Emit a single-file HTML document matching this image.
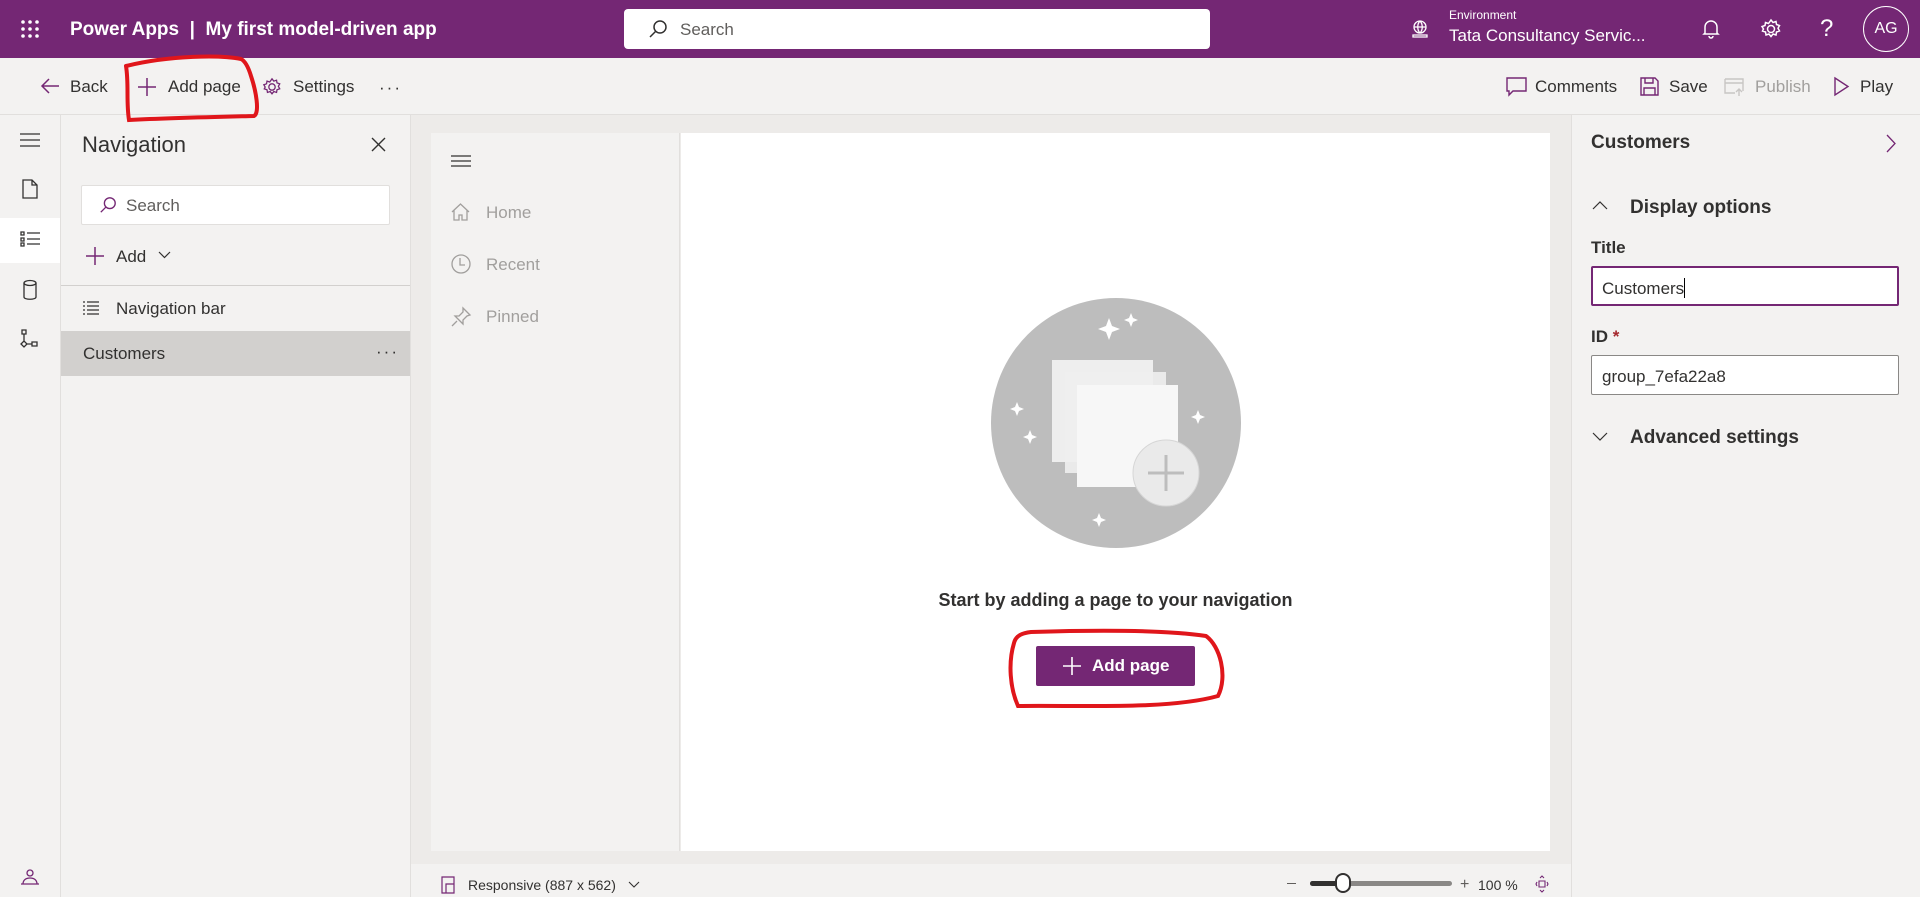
<!DOCTYPE html>
<html><head><meta charset="utf-8"><style>
*{box-sizing:border-box;margin:0;padding:0}
body{width:1920px;height:897px;overflow:hidden;font-family:"Liberation Sans",sans-serif;background:#f3f2f1;position:relative;color:#323130}
.a{position:absolute}
.top{left:0;top:0;width:1920px;height:58px;background:#742774;color:#fff}
.tb{left:0;top:58px;width:1920px;height:57px;background:#f3f2f1;border-bottom:1px solid #e1dfdd}
.t17{font-size:17px;line-height:20px}
svg{position:absolute;overflow:visible}
</style></head><body>
<div class="a top">
 <svg style="left:20px;top:19px" width="20" height="20" viewBox="0 0 20 20" fill="#fff"><circle cx="3" cy="3" r="1.8"/><circle cx="10" cy="3" r="1.8"/><circle cx="17" cy="3" r="1.8"/><circle cx="3" cy="10" r="1.8"/><circle cx="10" cy="10" r="1.8"/><circle cx="17" cy="10" r="1.8"/><circle cx="3" cy="17" r="1.8"/><circle cx="10" cy="17" r="1.8"/><circle cx="17" cy="17" r="1.8"/></svg>
 <div class="a" style="left:70px;top:19px;font-size:19px;font-weight:bold;white-space:nowrap">Power Apps &nbsp;|&nbsp; My first model-driven app</div>
 <div class="a" style="left:624px;top:9px;width:586px;height:40px;background:#fff;border-radius:4px"></div>
 <svg style="left:648px;top:19px" width="20" height="20" viewBox="0 0 20 20" fill="none" stroke="#323130" stroke-width="1.5"><circle cx="12" cy="8" r="6"/><path d="M8 12L2 18"/></svg>
 <div class="a" style="left:680px;top:20px;font-size:17px;color:#605e5c">Search</div>
 <svg style="left:1410px;top:19px" width="20" height="20" viewBox="0 0 20 20" fill="none" stroke="#fff" stroke-width="1.3"><circle cx="10" cy="8" r="6"/><path d="M4 8h12M10 2c-3 3-3 9 0 12M10 2c3 3 3 9 0 12M3 16h14v2H3z"/></svg>
 <div class="a" style="left:1449px;top:8px;font-size:12px">Environment</div>
 <div class="a" style="left:1449px;top:26px;font-size:17px;white-space:nowrap">Tata Consultancy Servic...</div>
 <svg style="left:1701px;top:18px" width="20" height="22" viewBox="0 0 20 22" fill="none" stroke="#fff" stroke-width="1.5"><path d="M4 15V9a6 6 0 0112 0v6l1 1H3zM8 18a2 2 0 004 0"/></svg>
 <svg style="left:1760px;top:18px" width="22" height="22" viewBox="0 0 22 22" fill="none" stroke="#fff" stroke-width="1.5"><circle cx="11" cy="11" r="3.5"/><path d="M11 2l2 2.5 3-1 .5 3 3 1-1.5 2.7 1.5 2.8-3 1-.5 3-3-1-2 2.5-2-2.5-3 1-.5-3-3-1L3.5 11 2 8.5l3-1 .5-3 3 1z"/></svg>
 <div class="a" style="left:1820px;top:15px;font-size:24px">?</div>
 <div class="a" style="left:1863px;top:6px;width:46px;height:46px;border:1.5px solid #fff;border-radius:50%;font-size:16px;text-align:center;line-height:43px">AG</div>
</div>
<div class="a tb">
 <svg style="left:40px;top:19px" width="20" height="18" viewBox="0 0 20 18" fill="none" stroke="#742774" stroke-width="1.5"><path d="M19 9H2M9 2L2 9l7 7"/></svg>
 <div class="a t17" style="left:70px;top:19px">Back</div>
 <svg style="left:137px;top:19px" width="20" height="20" viewBox="0 0 20 20" stroke="#742774" stroke-width="1.5"><path d="M10 1v18M1 10h18"/></svg>
 <div class="a t17" style="left:168px;top:19px">Add page</div>
 <svg style="left:262px;top:19px" width="20" height="20" viewBox="0 0 22 22" fill="none" stroke="#742774" stroke-width="1.4"><circle cx="11" cy="11" r="3.5"/><path d="M11 2l2 2.5 3-1 .5 3 3 1-1.5 2.7 1.5 2.8-3 1-.5 3-3-1-2 2.5-2-2.5-3 1-.5-3-3-1L3.5 11 2 8.5l3-1 .5-3 3 1z"/></svg>
 <div class="a t17" style="left:293px;top:19px">Settings</div>
 <div class="a t17" style="left:379px;top:20px;letter-spacing:2px">···</div>
 <svg style="left:1506px;top:19px" width="21" height="20" viewBox="0 0 21 20" fill="none" stroke="#742774" stroke-width="1.4"><path d="M1 1h19v13H7l-4 4v-4H1z"/></svg>
 <div class="a t17" style="left:1535px;top:19px">Comments</div>
 <svg style="left:1640px;top:19px" width="19" height="19" viewBox="0 0 19 19" fill="none" stroke="#742774" stroke-width="1.4"><path d="M1 1h14l3 3v14H1zM5 1v5h8V1M4 18v-7h11v7"/></svg>
 <div class="a t17" style="left:1669px;top:19px">Save</div>
 <svg style="left:1724px;top:19px" width="20" height="20" viewBox="0 0 20 20" fill="none" stroke="#c8c6c4" stroke-width="1.4"><path d="M1 2h18v12M1 2v14h10M1 6h18M15 19v-7M12 15l3-3 3 3"/></svg>
 <div class="a t17" style="left:1755px;top:19px;color:#a19f9d">Publish</div>
 <svg style="left:1833px;top:19px" width="16" height="19" viewBox="0 0 16 19" fill="none" stroke="#742774" stroke-width="1.4"><path d="M2 1l13 8.5L2 18z"/></svg>
 <div class="a t17" style="left:1860px;top:19px">Play</div>
</div>
<div class="a" style="left:0;top:115px;width:61px;height:782px;background:#f3f2f1;border-right:1px solid #e1dfdd"></div>
<div class="a" style="left:0;top:218px;width:60px;height:45px;background:#fff"></div>
<svg style="left:20px;top:133px" width="20" height="14" viewBox="0 0 20 14" stroke="#323130" stroke-width="1.3"><path d="M0 1h20M0 7h20M0 13h20"/></svg>
<svg style="left:22px;top:179px" width="16" height="20" viewBox="0 0 16 20" fill="none" stroke="#323130" stroke-width="1.3"><path d="M1 1h9l5 5v13H1zM10 1v5h5"/></svg>
<svg style="left:20px;top:231px" width="20" height="16" viewBox="0 0 20 16" fill="none" stroke="#323130" stroke-width="1.3"><path d="M1 1h3v3H1zM1 7h3v3H1zM1 12h3v3H1zM7 2h13M7 8h13M7 13h13"/></svg>
<svg style="left:23px;top:280px" width="14" height="20" viewBox="0 0 14 20" fill="none" stroke="#323130" stroke-width="1.3"><ellipse cx="7" cy="3" rx="6" ry="2.5"/><path d="M1 3v14c0 3 12 3 12 0V3"/></svg>
<svg style="left:20px;top:329px" width="20" height="20" viewBox="0 0 20 20" fill="none" stroke="#323130" stroke-width="1.3"><path d="M2 1h4v4H2zM4 5v7M1 15l3-3 3 3-3 3zM7 15h5M12 13h5v4h-5z"/></svg>
<svg style="left:20px;top:868px" width="20" height="18" viewBox="0 0 20 18" fill="none" stroke="#742774" stroke-width="1.3"><circle cx="10" cy="5" r="3"/><path d="M3 16c0-4 3-6 7-6s7 2 7 6M1 16h18"/></svg>
<div class="a" style="left:61px;top:115px;width:350px;height:782px;background:#f3f2f1;border-right:1px solid #e1dfdd"></div>
<div class="a" style="left:82px;top:132px;font-size:22px">Navigation</div>
<svg style="left:371px;top:137px" width="15" height="15" viewBox="0 0 15 15" stroke="#323130" stroke-width="1.4"><path d="M1 1l13 13M14 1L1 14"/></svg>
<div class="a" style="left:81px;top:185px;width:309px;height:40px;background:#fff;border:1px solid #e1dfdd;border-radius:2px"></div>
<svg style="left:99px;top:196px" width="18" height="18" viewBox="0 0 20 20" fill="none" stroke="#742774" stroke-width="1.5"><circle cx="12" cy="8" r="6"/><path d="M8 12L2 18"/></svg>
<div class="a t17" style="left:126px;top:196px;color:#605e5c">Search</div>
<svg style="left:85px;top:246px" width="20" height="20" viewBox="0 0 20 20" stroke="#742774" stroke-width="1.5"><path d="M10 1v18M1 10h18"/></svg>
<div class="a t17" style="left:116px;top:247px">Add</div>
<svg style="left:158px;top:251px" width="13" height="8" viewBox="0 0 13 8" fill="none" stroke="#323130" stroke-width="1.2"><path d="M1 1l5.5 5.5L12 1"/></svg>
<div class="a" style="left:61px;top:285px;width:349px;height:1px;background:#d2d0ce"></div>
<svg style="left:83px;top:301px" width="16" height="14" viewBox="0 0 16 14" stroke="#323130" stroke-width="1.2"><path d="M0 1h2M4 1h12M0 5h2M4 5h12M0 9h2M4 9h12M0 13h2M4 13h12"/></svg>
<div class="a t17" style="left:116px;top:299px">Navigation bar</div>
<div class="a" style="left:61px;top:331px;width:349px;height:45px;background:#d2d0ce"></div>
<div class="a t17" style="left:83px;top:344px">Customers</div>
<div class="a t17" style="left:376px;top:342px;letter-spacing:2px">···</div>
<div class="a" style="left:411px;top:115px;width:1160px;height:749px;background:#edebe9"></div>
<div class="a" style="left:431px;top:133px;width:249px;height:718px;background:#f3f2f1;border-right:1px solid #e1dfdd"></div>
<div class="a" style="left:681px;top:133px;width:869px;height:718px;background:#fff"></div>
<svg style="left:451px;top:155px" width="20" height="12" viewBox="0 0 20 12" stroke="#323130" stroke-width="1.2"><path d="M0 1h20M0 6h20M0 11h20"/></svg>
<svg style="left:451px;top:203px" width="19" height="18" viewBox="0 0 19 18" fill="none" stroke="#a19f9d" stroke-width="1.3"><path d="M1 9L9.5 1 18 9M3 7v10h5v-5h3v5h5V7"/></svg>
<div class="a t17" style="left:486px;top:203px;color:#a19f9d">Home</div>
<svg style="left:451px;top:254px" width="20" height="20" viewBox="0 0 20 20" fill="none" stroke="#a19f9d" stroke-width="1.3"><circle cx="10" cy="10" r="9"/><path d="M9 4v7h5"/></svg>
<div class="a t17" style="left:486px;top:255px;color:#a19f9d">Recent</div>
<svg style="left:451px;top:307px" width="20" height="20" viewBox="0 0 20 20" fill="none" stroke="#a19f9d" stroke-width="1.3"><path d="M12 1l7 7-3 1-4 4 0 4-8-8 4 0 4-4zM6 14l-5 5"/></svg>
<div class="a t17" style="left:486px;top:307px;color:#a19f9d">Pinned</div>
<svg style="left:991px;top:298px" width="250" height="250" viewBox="0 0 250 250">
 <circle cx="125" cy="125" r="125" fill="#bdbdbd"/>
 <rect x="61" y="62" width="101" height="102" fill="#f3f3f3" opacity=".9"/>
 <rect x="74" y="74" width="101" height="101" fill="#eeeeee" opacity=".9"/>
 <rect x="86" y="87" width="101" height="102" fill="#f7f7f7"/>
 <circle cx="175" cy="175" r="33" fill="#eaeaea" stroke="#d6d6d6"/>
 <path d="M175 157v36M157 175h36" stroke="#bdbdbd" stroke-width="3"/>
 <g fill="#fff"><path d="M118 20l3 8 8 3-8 3-3 8-3-8-8-3 8-3z"/><path d="M140 15l2 5 5 2-5 2-2 5-2-5-5-2 5-2z"/><path d="M27 44l2 5 5 2-5 2-2 5-2-5-5-2 5-2z" transform="translate(-1 60)"/><path d="M27 125l2 5 5 2-5 2-2 5-2-5-5-2 5-2z" transform="translate(12 7)"/><path d="M207 112l2 5 5 2-5 2-2 5-2-5-5-2 5-2z"/><path d="M108 215l2 5 5 2-5 2-2 5-2-5-5-2 5-2z"/></g>
</svg>
<div class="a" style="left:681px;top:590px;width:869px;text-align:center;font-size:18px;font-weight:bold;color:#323130">Start by adding a page to your navigation</div>
<div class="a" style="left:1036px;top:646px;width:159px;height:40px;background:#742774;border-radius:2px;color:#fff;font-size:17px;font-weight:bold;line-height:40px;padding-left:56px">Add page</div>
<svg style="left:1062px;top:656px" width="20" height="20" viewBox="0 0 20 20" stroke="#fff" stroke-width="1.6"><path d="M10 1v18M1 10h18"/></svg>
<div class="a" style="left:411px;top:864px;width:1160px;height:33px;background:#f3f2f1"></div>
<svg style="left:441px;top:876px" width="14" height="18" viewBox="0 0 14 18" fill="none" stroke="#742774" stroke-width="1.2"><path d="M1 1h12v16H1zM5 17V8h8"/></svg>
<div class="a" style="left:468px;top:877px;font-size:14px">Responsive (887 x 562)</div>
<svg style="left:628px;top:881px" width="12" height="7" viewBox="0 0 12 7" fill="none" stroke="#323130" stroke-width="1.1"><path d="M1 1l5 5 5-5"/></svg>
<div class="a" style="left:1287px;top:883px;width:9px;height:1px;background:#605e5c"></div>
<div class="a" style="left:1310px;top:881px;width:142px;height:5px;border-radius:3px;background:#8a8886"></div>
<div class="a" style="left:1310px;top:881px;width:33px;height:5px;border-radius:3px;background:#323130"></div>
<div class="a" style="left:1335px;top:873px;width:16px;height:20px;border-radius:8px;background:#fff;border:2px solid #323130"></div>
<div class="a" style="left:1460px;top:876px;font-size:16px;color:#605e5c">+</div>
<div class="a" style="left:1478px;top:877px;font-size:14px">100 %</div>
<svg style="left:1535px;top:874px" width="14" height="20" viewBox="0 0 14 20" fill="none" stroke="#742774" stroke-width="1.1"><path d="M4 7h6v6H4zM5 4l2-2 2 2M5 16l2 2 2-2M2 8l-1 2 1 2M12 8l1 2-1 2"/></svg>
<div class="a" style="left:1571px;top:115px;width:349px;height:782px;background:#f3f2f1;border-left:1px solid #e1dfdd"></div>
<div class="a" style="left:1591px;top:132px;font-size:19px;font-weight:bold">Customers</div>
<svg style="left:1886px;top:134px" width="10" height="19" viewBox="0 0 10 19" fill="none" stroke="#742774" stroke-width="1.3"><path d="M1 1l8 8.5L1 18"/></svg>
<svg style="left:1592px;top:201px" width="16" height="9" viewBox="0 0 16 9" fill="none" stroke="#323130" stroke-width="1.2"><path d="M1 8l7-7 7 7"/></svg>
<div class="a" style="left:1630px;top:197px;font-size:19px;font-weight:bold">Display options</div>
<div class="a" style="left:1591px;top:238px;font-size:17px;font-weight:bold">Title</div>
<div class="a" style="left:1591px;top:266px;width:308px;height:40px;background:#fff;border:2px solid #742774;border-radius:2px;font-size:17px;padding:10px 0 0 9px">Customers<span style="display:inline-block;width:1px;height:20px;background:#000;vertical-align:-4px"></span></div>
<div class="a" style="left:1591px;top:327px;font-size:17px;font-weight:bold">ID <span style="color:#a4262c">*</span></div>
<div class="a" style="left:1591px;top:355px;width:308px;height:40px;background:#fff;border:1px solid #8a8886;border-radius:2px;font-size:17px;padding:11px 0 0 10px">group_7efa22a8</div>
<svg style="left:1592px;top:432px" width="16" height="9" viewBox="0 0 16 9" fill="none" stroke="#323130" stroke-width="1.2"><path d="M1 1l7 7 7-7"/></svg>
<div class="a" style="left:1630px;top:427px;font-size:19px;font-weight:bold">Advanced settings</div>
<svg style="left:0;top:0" width="1920" height="897" viewBox="0 0 1920 897" fill="none" stroke="#e0161b" stroke-width="4" stroke-linecap="round">
 <path d="M126 66c3 18 0 36 3 54 40-2 85-3 125-4 6-3 2-25-3-40-3-10-6-15-10-17-20-4-70-4-115 7"/>
 <path d="M1014 643c-6 20-4 45 4 63 60-1 150 4 200-10 10-20 2-50-12-60-40-6-110-6-175-4-8 1-15 3-17 11"/>
</svg>
</body></html>
